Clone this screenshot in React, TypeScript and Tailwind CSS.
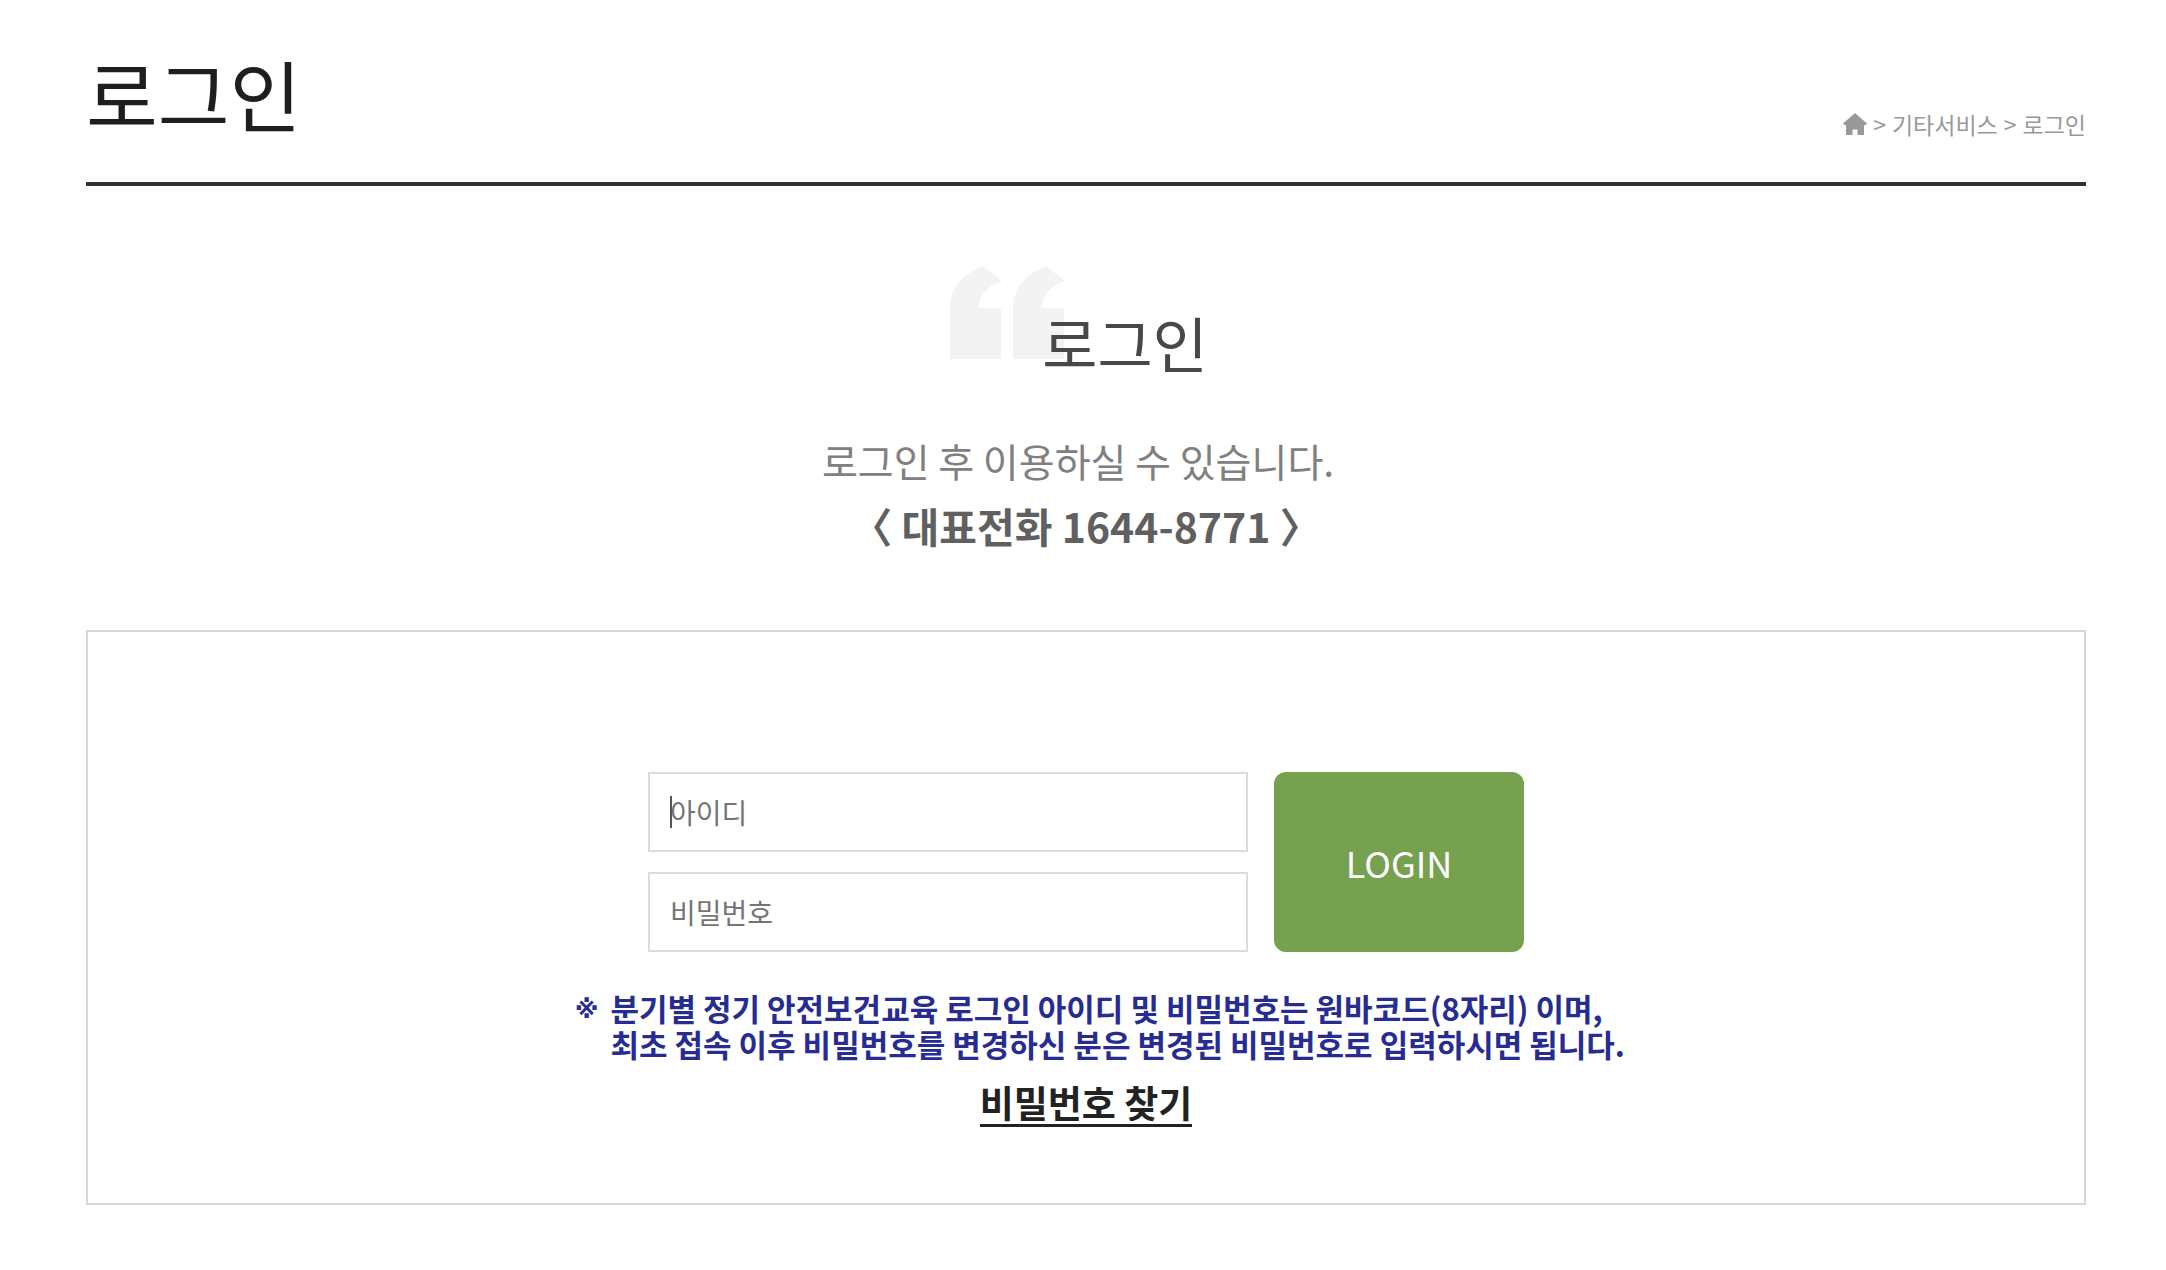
import React from "react";

interface Crumb {
  label: string;
  href: string;
}

const CRUMBS: Crumb[] = [
  { label: "기타서비스", href: "#etc" },
  { label: "로그인", href: "#login" },
];

function HomeIcon(): React.JSX.Element {
  return (
    <svg width="24" height="22" viewBox="0 0 24 22" fill="#999999" aria-hidden="true">
      <path d="M12 0 24 10.5 22.5 12H21v10h-6.500v-5.500h-5V22H3V12H1.500L0 10.500Z" />
    </svg>
  );
}

function QuoteMark(): React.JSX.Element {
  return (
    <svg
      width="116"
      height="93"
      viewBox="0 0 116 93"
      fill="#f3f3f3"
      className="absolute right-full -mr-6 top-0"
      aria-hidden="true"
    >
      <path d="M33 0 52 15C38 20 29 28 28.500 42H51V93H0V42C0 22 13 8 33 0Z" />
      <path d="M96 0 115 15C101 20 92 28 91.500 42H114V93H63V42C63 22 76 8 96 0Z" />
    </svg>
  );
}

export default function App(): React.JSX.Element {
  return (
    <main className="min-h-screen bg-white pl-[86px] pr-20 pb-16 font-['Noto_Sans_CJK_KR',sans-serif]">
      {/* 페이지 제목 */}
      <header className="flex items-end justify-between border-b-4 border-[#333132] pt-11 pb-10">
        <h1 className="text-[78px] leading-[98px] text-[#1e1e1e]">로그인</h1>
        <nav className="flex items-center gap-[6px] text-[23px] leading-9 text-[#999999]">
          <a href="#home" aria-label="홈">
            <HomeIcon />
          </a>
          {CRUMBS.map((crumb) => (
            <React.Fragment key={crumb.label}>
              <span>&gt;</span>
              <a href={crumb.href}>{crumb.label}</a>
            </React.Fragment>
          ))}
        </nav>
      </header>

      {/* 안내 문구 */}
      <section className="flex flex-col items-center pt-20 text-center">
        <div className="relative ml-[78px] pt-[34px]">
          <QuoteMark />
          <h2 className="relative text-[60px] leading-[84px] text-[#484848]">로그인</h2>
        </div>
        <p className="mt-11 mr-4 text-[39px] leading-[64px] text-[#808080]">
          로그인 후 이용하실 수 있습니다.
        </p>
        <p className="text-[41px] leading-[66px] font-bold text-[#606060]">
          〈 대표전화 1644-8771 〉
        </p>
      </section>

      {/* 로그인 폼 */}
      <section className="mt-[72px] flex flex-col items-center border-2 border-[#d7d7d7] pt-[140px] pb-[76px]">
        <form className="flex gap-[26px]" onSubmit={(e) => e.preventDefault()}>
          <div className="flex w-[600px] flex-col gap-5">
            <div className="relative">
              <input
                type="text"
                aria-label="아이디"
                placeholder="아이디"
                className="block h-20 w-full border-2 border-[#dddddd] px-5 text-[28px] text-[#333333] outline-none placeholder:text-[#757575]"
              />
              <span className="absolute top-6 left-[22px] h-8 w-[2px] bg-[#555555]" />
            </div>
            <input
              type="password"
              aria-label="비밀번호"
              placeholder="비밀번호"
              className="block h-20 w-full border-2 border-[#dddddd] px-5 text-[28px] text-[#333333] outline-none placeholder:text-[#757575]"
            />
          </div>
          <button
            type="submit"
            className="w-[250px] rounded-xl bg-[#76a14f] text-[36px] text-white"
          >
            LOGIN
          </button>
        </form>

        <div className="mt-[38px] ml-7 flex gap-3 text-left text-[31px] leading-[36px] font-bold text-[#262c92]">
          <span className="font-['DejaVu_Sans',sans-serif] text-[24px] leading-10">※</span>
          <div>
            <p>분기별 정기 안전보건교육 로그인 아이디 및 비밀번호는 원바코드(8자리) 이며,</p>
            <p>최초 접속 이후 비밀번호를 변경하신 분은 변경된 비밀번호로 입력하시면 됩니다.</p>
          </div>
        </div>
        <a
          href="#find-password"
          className="mt-[18px] border-b-3 border-[#222222] text-[37px] leading-[44px] font-bold text-[#222222]"
        >
          비밀번호 찾기
        </a>
      </section>
    </main>
  );
}
